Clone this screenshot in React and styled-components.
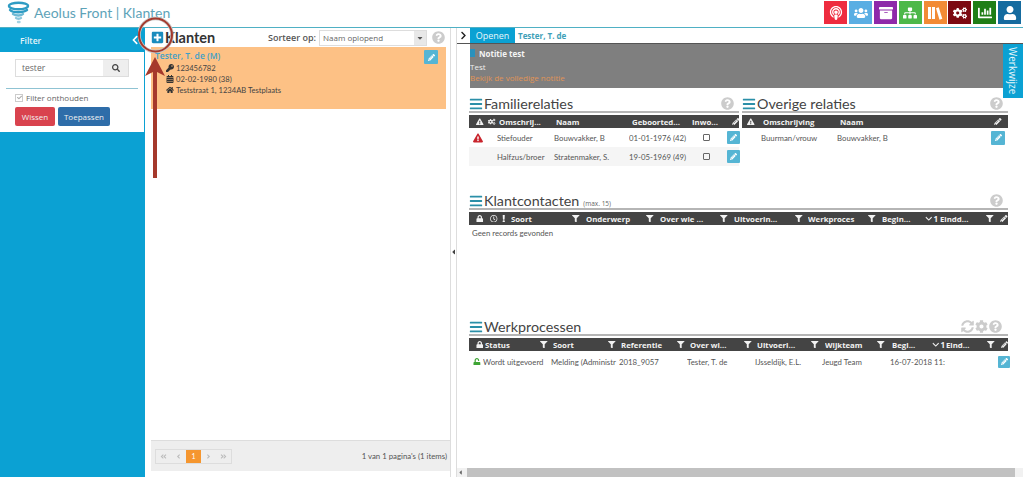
import React from 'react';
import styled, {createGlobalStyle} from 'styled-components';
import {
    FaPlusSquare, FaSearch, FaChevronLeft, FaChevronRight, FaKey, FaHome, FaCalendarAlt,
    FaExclamationTriangle, FaCogs, FaPencilAlt, FaFilter, FaLock, FaUnlock, FaRegClock, FaExclamation,
    FaBars, FaQuestionCircle, FaSyncAlt, FaCog, FaPodcast, FaUsers, FaArchive, FaSitemap,
    FaChartBar, FaUser, FaCheck, FaCaretDown, FaAngleDoubleLeft, FaAngleDoubleRight, FaAngleLeft,
    FaAngleRight, FaCaretLeft, FaChevronDown,
} from 'react-icons/fa';

const Global = createGlobalStyle`
  html, body { margin: 0; padding: 0; height: 100%; overflow: hidden; background: #fff; }
  body { font-family: "Open Sans", "Liberation Sans", sans-serif; color: #555; }
  * { box-sizing: border-box; }
`
const Page = styled.div`
  position: relative;
  width: 1023px;
  height: 477px;
  display: flex;
  flex-direction: column;
  overflow: hidden;
`
const TopBar = styled.header`
  height: 28px;
  flex: none;
  display: flex;
  align-items: center;
  justify-content: space-between;
  padding: 0 2px 2px 7px;
  border-bottom: 1px solid #4fb0c4;
`
const Brand = styled.div`
  display: flex;
  align-items: center;
  gap: 4px;
  font-family: Lato, sans-serif;
  font-size: 14px;
  color: #5ea3b8;
`
const Tiles = styled.nav`
  display: flex;
  gap: 1.8px;
`
const Tile = styled.div`
  width: 23px;
  height: 23px;
  display: flex;
  align-items: center;
  justify-content: center;
  color: #fff;
  font-size: 14px;
  background: ${p => p.$color};
`
const Body = styled.div`
  flex: 1;
  display: flex;
  min-height: 0;
`
const Sidebar = styled.aside`
  width: 145px;
  flex: none;
  background: #0ba1d3;
`
const FilterHead = styled.div`
  height: 24px;
  display: flex;
  align-items: center;
  justify-content: space-between;
  padding: 0 5px 0 20px;
  color: #e4f3f8;
  font-size: 8.5px;
  font-weight: 600;
  svg { color: #fff; font-size: 10px; }
`
const FilterBody = styled.div`
  height: 80px;
  background: #fff;
  margin-right: 1px;
  padding-top: 7px;
`
const SearchBox = styled.div`
  display: flex;
  width: 114px;
  height: 18px;
  margin-left: 15px;
  border: 1px solid #ddd;
  font-size: 8.5px;
  color: #666;
`
const SearchText = styled.div`
  flex: 1;
  padding: 2px 6px;
`
const SearchBtn = styled.div`
  width: 25px;
  background: #eee;
  display: flex;
  align-items: center;
  justify-content: center;
  font-size: 8px;
  color: #444;
`
const Rule = styled.div`
  height: 1px;
  background: #8fc3d3;
  margin: 11px 6px 3px;
`
const Remember = styled.label`
  display: flex;
  align-items: center;
  gap: 3px;
  margin-left: 15px;
  font-size: 8px;
  color: #666;
`
const Check = styled.span`
  width: 8px;
  height: 8px;
  border: 1px solid #ccc;
  display: inline-flex;
  align-items: center;
  justify-content: center;
  font-size: 5px;
  color: #aaa;
`
const Buttons = styled.div`
  display: flex;
  gap: 3px;
  margin: 4px 0 0 15px;
`
const Btn = styled.div`
  height: 19px;
  width: ${p => p.$w}px;
  display: flex;
  align-items: center;
  justify-content: center;
  border-radius: 2px;
  font-size: 8px;
  color: #f1f1f1;
  background: ${p => p.$color};
`
const ListPane = styled.section`
  width: 306px;
  flex: none;
  display: flex;
  flex-direction: column;
  padding-left: 6px;
  border-right: 1px solid #ddd;
`
const ListHead = styled.div`
  height: 19px;
  flex: none;
  display: flex;
  align-items: center;
  padding-right: 5px;
`
const PlusIcon = styled.span`
  display: flex;
  font-size: 13px;
  color: #1a8cbd;
  margin-right: 1px;
`
const Title = styled.h2`
  margin: 0;
  font-family: Lato, sans-serif;
  font-size: 14.5px;
  font-weight: 700;
  color: #333;
  flex: 1;
`
const SortLabel = styled.span`
  font-size: 9px;
  font-weight: 600;
  color: #555;
  margin-right: 3px;
`
const Select = styled.div`
  width: 108px;
  height: 16px;
  display: flex;
  justify-content: space-between;
  align-items: center;
  border: 1px solid #ddd;
  padding-left: 3px;
  font-size: 8px;
  color: #666;
`
const SelectArrow = styled.span`
  width: 12px;
  height: 14px;
  background: #e8e8e8;
  display: flex;
  align-items: center;
  justify-content: center;
  font-size: 8px;
  color: #555;
`
const Help = styled.span`
  display: inline-flex;
  color: #ccc;
  font-size: 13px;
  margin-left: 5px;
`
const Card = styled.article`
  position: relative;
  height: 62px;
  margin-right: 4px;
  background: #fdc185;
  padding: 3px 0 0 4px;
`
const CardName = styled.div`
  font-size: 8.5px;
  font-weight: 600;
  color: #3d9fc8;
  margin-bottom: 1px;
`
const CardLine = styled.div`
  display: flex;
  align-items: center;
  gap: 2px;
  height: 11px;
  margin-left: 11px;
  font-family: Lato, sans-serif;
  font-size: 7.6px;
  color: #444;
  svg { width: 8px; font-size: 8px; color: #333; }
`
const EditBtn = styled.span`
  width: ${p => p.$size || 13}px;
  height: ${p => p.$size || 13}px;
  display: inline-flex;
  align-items: center;
  justify-content: center;
  border-radius: 1px;
  background: #55b5d4;
  color: #fff;
  font-size: 7px;
`
const CardEdit = styled.div`
  position: absolute;
  top: 3px;
  right: 8px;
  display: flex;
`
const Spacer = styled.div`
  flex: 1;
`
const ListFoot = styled.div`
  height: 31px;
  flex: none;
  margin-bottom: 6px;
  border-top: 1px solid #ddd;
  background: #eee;
  display: flex;
  align-items: center;
  justify-content: space-between;
  padding: 0 3px 0 4px;
  font-family: Lato, sans-serif;
  font-size: 7.8px;
  color: #555;
`
const Pager = styled.div`
  display: flex;
  height: 15px;
  border: 1px solid #ddd;
`
const PageCell = styled.span`
  width: 15px;
  display: flex;
  align-items: center;
  justify-content: center;
  font-size: 7px;
  color: ${p => p.$on ? '#fff' : '#bbb'};
  background: ${p => p.$on ? '#f5962f' : 'transparent'};
`
const Splitter = styled.div`
  width: 5px;
  flex: none;
  display: flex;
  align-items: center;
  justify-content: center;
  padding-bottom: 2px;
  font-size: 8px;
  color: #444;
`
const DetailPane = styled.section`
  position: relative;
  flex: 1;
  min-width: 0;
  display: flex;
  flex-direction: column;
  border-left: 1px solid #ddd;
`
const TabBar = styled.div`
  height: 16px;
  flex: none;
  display: flex;
  align-items: stretch;
  border-bottom: 1px solid #555;
`
const Toggle = styled.span`
  width: 13px;
  display: flex;
  align-items: center;
  justify-content: center;
  font-size: 9px;
  color: #222;
`
const Tab = styled.span`
  width: 45px;
  display: flex;
  align-items: center;
  justify-content: center;
  background: #0ba1d3;
  color: #e8f6fa;
  font-size: 9px;
`
const TabName = styled.span`
  display: flex;
  align-items: center;
  margin-left: 3px;
  font-size: 8px;
  font-weight: 700;
  color: #3f9fb8;
`
const Content = styled.div`
  flex: 1;
  min-height: 0;
  padding-left: 12px;
`
const Note = styled.div`
  width: 533px;
  height: 44px;
  margin-left: 1px;
  background: #7f7f7f;
  padding-top: 3px;
  font-size: 8px;
  color: #eee;
`
const NoteTitle = styled.div`
  font-weight: 700;
  color: #f4f4f4;
  display: flex;
  align-items: center;
  gap: 4px;
  height: 12px;
  &::before { content: ""; width: 5px; height: 8px; background: #2a91bd; }
`
const NoteText = styled.div`
  height: 11px;
  margin-top: 2px;
`
const NoteLink = styled.div`
  height: 11px;
  color: #e09456;
`
const WerkTab = styled.div`
  position: absolute;
  top: 16px;
  right: 0;
  width: 20px;
  height: 54px;
  display: flex;
  align-items: center;
  justify-content: center;
  background: #0ba1d3;
  color: #e8f6fa;
  font-size: 10px;
  writing-mode: vertical-rl;
`
const TwoCol = styled.div`
  display: flex;
  gap: 3px;
  height: 97px;
  margin-top: 8px;
`
const Block = styled.div`
  width: ${p => p.$w}px;
`
const BlockHead = styled.div`
  height: 17px;
  display: flex;
  align-items: center;
  gap: 1px;
  padding-right: ${p => p.$pad || 5}px;
  border-bottom: 2px solid #b5b5b5;
`
const Burger = styled.span`
  display: flex;
  font-size: 14px;
  color: #2b8fa8;
`
const BlockTitle = styled.h3`
  margin: 0;
  font-family: Lato, sans-serif;
  font-size: 14.3px;
  line-height: 17px;
  font-weight: 400;
  color: #444;
`
const Small = styled.small`
  font-size: 6.5px;
  color: #666;
  margin: 5px 0 0 3px;
`
const Tools = styled.span`
  margin-left: auto;
  display: flex;
  gap: 1px;
  color: #ccc;
`
const HeadRow = styled.div`
  display: grid;
  grid-template-columns: ${p => p.$cols};
  height: 13px;
  margin-top: 2px;
  background: #444;
  color: #f2f2f2;
  font-size: 7.8px;
  font-weight: 700;
  align-items: center;
  white-space: nowrap;
  svg { font-size: 7.5px; display: block; }
`
const Row = styled.div`
  display: grid;
  grid-template-columns: ${p => p.$cols};
  height: ${p => p.$h || 19}px;
  align-items: center;
  font-family: Lato, sans-serif;
  font-size: 7.8px;
  color: #555;
  white-space: nowrap;
  background: ${p => p.$alt ? '#f5f5f5' : 'transparent'};
`
const Cell = styled.span`
  display: flex;
  align-items: center;
  overflow: hidden;
  padding-left: ${p => p.$pad || 0}px;
  color: ${p => p.$color || 'inherit'};
  font-size: ${p => p.$size ? p.$size + 'px' : 'inherit'};
`
const SortCell = styled(Cell)`
  gap: 1px;
  font-size: 8px;
`
const Box = styled.span`
  width: 7px;
  height: 7px;
  border: 1px solid #666;
  border-radius: 1px;
`
const Empty = styled.div`
  font-family: Lato, sans-serif;
  font-size: 7.8px;
  color: #555;
  padding: 3px;
`
const Third = styled.div`
  margin-top: ${p => p.$top}px;
  width: 539px;
`
const ScrollBar = styled.div`
  height: 9px;
  flex: none;
  background: #f1f1f1;
  display: flex;
  align-items: center;
  padding-right: 8px;
  font-size: 7px;
  color: #666;
`
const Thumb = styled.div`
  flex: 1;
  height: 9px;
  margin-left: 3px;
  background: #c1c1c1;
`
const ArrowMark = styled.svg`
  position: absolute;
  left: 138px;
  top: 14px;
`

const famCols = '19px 11px 57px 76px 60px 40px 10px'
const famRowCols = '28px 57px 75px 74px 24px 12px'
const otherCols = '21px 77px 1fr 14px'
const otherRowCols = '19px 76px 1fr 17px'
const contactCols = '7px 14px 10px 11px 61px 14px 60px 14px 60px 14px 61px 13px 60px 14px 43px 15px 46px 14px 1fr'
const procCols = '7px 9px 55px 13px 55px 13px 56px 13px 54px 13px 54px 14px 52px 15px 40px 14px 41px 14px 1fr'
const procRowCols = '14px 68px 68px 68px 68px 67px 68px 108px 14px'

const BooksIcon = () => (
    <svg width="16" height="14" viewBox="0 0 16 14" fill="#fff">
        <rect x="1" y="1" width="3" height="12"/>
        <rect x="5" y="1" width="3" height="12"/>
        <path d="M9 2.2l2.7-1 3.6 11.6-2.8.9z"/>
    </svg>
)

const tiles = [
    ['#ee2c3f', <FaPodcast/>], ['#59aee3', <FaUsers/>], ['#8e2aaa', <FaArchive/>], ['#4db849', <FaSitemap/>],
    ['#f28b35', <BooksIcon/>], ['#7c0a12', <FaCogs/>], ['#1f7e17', <FaChartBar/>], ['#156b9f', <FaUser/>],
]

const Logo = () => (
    <svg width="23" height="24" viewBox="0 0 23 24">
        <g fill="none" stroke="#2f9cc4" strokeWidth="2.4" strokeLinecap="round">
            <ellipse cx="11.5" cy="5" rx="9.5" ry="3.2"/>
            <path d="M3 9c3 3 13 3 17 0"/>
            <path d="M6 13c3 2 8 2 10 0" stroke="#6db9d4"/>
            <path d="M9 17c1 1 4 1 5 0" stroke="#8ac6dc"/>
            <path d="M11 21h1.5" stroke="#a5d2e2"/>
        </g>
    </svg>
)

const App = () => {
    return (
        <Page>
            <Global/>
            <TopBar>
                <Brand><Logo/>Aeolus Front | Klanten</Brand>
                <Tiles>{tiles.map(([c, icon]) => <Tile key={c} $color={c}>{icon}</Tile>)}</Tiles>
            </TopBar>
            <Body>
                <Sidebar>
                    <FilterHead>Filter<FaChevronLeft/></FilterHead>
                    <FilterBody>
                        <SearchBox><SearchText>tester</SearchText><SearchBtn><FaSearch/></SearchBtn></SearchBox>
                        <Rule/>
                        <Remember><Check><FaCheck/></Check>Filter onthouden</Remember>
                        <Buttons>
                            <Btn $color="#d9434e" $w={40}>Wissen</Btn>
                            <Btn $color="#2e6da9" $w={52}>Toepassen</Btn>
                        </Buttons>
                    </FilterBody>
                </Sidebar>
                <ListPane>
                    <ListHead>
                        <PlusIcon><FaPlusSquare/></PlusIcon>
                        <Title>Klanten</Title>
                        <SortLabel>Sorteer op:</SortLabel>
                        <Select>Naam oplopend<SelectArrow><FaCaretDown/></SelectArrow></Select>
                        <Help><FaQuestionCircle/></Help>
                    </ListHead>
                    <Card>
                        <CardName>Tester, T. de (M)</CardName>
                        <CardLine><FaKey/>123456782</CardLine>
                        <CardLine><FaCalendarAlt/>02-02-1980 (38)</CardLine>
                        <CardLine><FaHome/>Teststraat 1, 1234AB Testplaats</CardLine>
                        <CardEdit><EditBtn $size={14}><FaPencilAlt/></EditBtn></CardEdit>
                    </Card>
                    <Spacer/>
                    <ListFoot>
                        <Pager>
                            <PageCell><FaAngleDoubleLeft/></PageCell>
                            <PageCell><FaAngleLeft/></PageCell>
                            <PageCell $on>1</PageCell>
                            <PageCell><FaAngleRight/></PageCell>
                            <PageCell><FaAngleDoubleRight/></PageCell>
                        </Pager>
                        1 van 1 pagina's (1 items)
                    </ListFoot>
                </ListPane>
                <Splitter><FaCaretLeft/></Splitter>
                <DetailPane>
                    <TabBar>
                        <Toggle><FaChevronRight/></Toggle>
                        <Tab>Openen</Tab>
                        <TabName>Tester, T. de</TabName>
                    </TabBar>
                    <Content>
                        <Note>
                            <NoteTitle>Notitie test</NoteTitle>
                            <NoteText>Test</NoteText>
                            <NoteLink>Bekijk de volledige notitie</NoteLink>
                        </Note>
                        <TwoCol>
                            <Block $w={270}>
                                <BlockHead>
                                    <Burger><FaBars/></Burger><BlockTitle>Familierelaties</BlockTitle>
                                    <Tools><FaQuestionCircle size={13}/></Tools>
                                </BlockHead>
                                <HeadRow $cols={famCols}>
                                    <Cell $pad={7}><FaExclamationTriangle/></Cell>
                                    <Cell><FaCogs/></Cell>
                                    <Cell>Omschrij...</Cell>
                                    <Cell>Naam</Cell>
                                    <Cell>Geboorted...</Cell>
                                    <Cell>Inwo...</Cell>
                                    <Cell><FaPencilAlt/></Cell>
                                </HeadRow>
                                <Row $cols={famRowCols} $h={19}>
                                    <Cell $pad={4} $color="#c9252d" $size={10}><FaExclamationTriangle/></Cell>
                                    <Cell>Stiefouder</Cell>
                                    <Cell>Bouwvakker, B</Cell>
                                    <Cell>01-01-1976 (42)</Cell>
                                    <Cell><Box/></Cell>
                                    <EditBtn><FaPencilAlt/></EditBtn>
                                </Row>
                                <Row $cols={famRowCols} $alt $h={19}>
                                    <Cell/>
                                    <Cell>Halfzus/broer</Cell>
                                    <Cell>Stratenmaker, S.</Cell>
                                    <Cell>19-05-1969 (49)</Cell>
                                    <Cell><Box/></Cell>
                                    <EditBtn><FaPencilAlt/></EditBtn>
                                </Row>
                            </Block>
                            <Block $w={266}>
                                <BlockHead>
                                    <Burger><FaBars/></Burger><BlockTitle>Overige relaties</BlockTitle>
                                    <Tools><FaQuestionCircle size={13}/></Tools>
                                </BlockHead>
                                <HeadRow $cols={otherCols}>
                                    <Cell $pad={5}><FaExclamationTriangle/></Cell>
                                    <Cell>Omschrijving</Cell>
                                    <Cell>Naam</Cell>
                                    <Cell><FaPencilAlt/></Cell>
                                </HeadRow>
                                <Row $cols={otherRowCols}>
                                    <Cell/>
                                    <Cell>Buurman/vrouw</Cell>
                                    <Cell>Bouwvakker, B</Cell>
                                    <EditBtn $size={14}><FaPencilAlt/></EditBtn>
                                </Row>
                            </Block>
                        </TwoCol>
                        <Third $top={0}>
                            <BlockHead>
                                <Burger><FaBars/></Burger><BlockTitle>Klantcontacten</BlockTitle><Small>(max. 15)</Small>
                                <Tools><FaQuestionCircle size={13}/></Tools>
                            </BlockHead>
                            <HeadRow $cols={contactCols}>
                                <Cell/>
                                <Cell><FaLock/></Cell>
                                <Cell><FaRegClock/></Cell>
                                <Cell><FaExclamation/></Cell>
                                <Cell>Soort</Cell><Cell><FaFilter/></Cell>
                                <Cell>Onderwerp</Cell><Cell><FaFilter/></Cell>
                                <Cell>Over wie ...</Cell><Cell><FaFilter/></Cell>
                                <Cell>Uitvoerin...</Cell><Cell><FaFilter/></Cell>
                                <Cell>Werkproces</Cell><Cell><FaFilter/></Cell>
                                <Cell>Begin...</Cell><SortCell><FaChevronDown/>1</SortCell>
                                <Cell>Eindd...</Cell><Cell><FaFilter/></Cell>
                                <Cell><FaPencilAlt/></Cell>
                            </HeadRow>
                            <Empty>Geen records gevonden</Empty>
                        </Third>
                        <Third $top={78}>
                            <BlockHead $pad={6}>
                                <Burger><FaBars/></Burger><BlockTitle>Werkprocessen</BlockTitle>
                                <Tools><FaSyncAlt size={13}/><FaCog size={13}/><FaQuestionCircle size={13}/></Tools>
                            </BlockHead>
                            <HeadRow $cols={procCols}>
                                <Cell/>
                                <Cell><FaLock/></Cell>
                                <Cell>Status</Cell><Cell><FaFilter/></Cell>
                                <Cell>Soort</Cell><Cell><FaFilter/></Cell>
                                <Cell>Referentie</Cell><Cell><FaFilter/></Cell>
                                <Cell>Over wi...</Cell><Cell><FaFilter/></Cell>
                                <Cell>Uitvoeri...</Cell><Cell><FaFilter/></Cell>
                                <Cell>Wijkteam</Cell><Cell><FaFilter/></Cell>
                                <Cell>Begi...</Cell><SortCell><FaChevronDown/>1</SortCell>
                                <Cell>Eind...</Cell><Cell><FaFilter/></Cell>
                                <Cell><FaPencilAlt/></Cell>
                            </HeadRow>
                            <Row $cols={procRowCols} $h={21}>
                                <Cell $color="#3fa535" $pad={4}><FaUnlock/></Cell>
                                <Cell>Wordt uitgevoerd</Cell>
                                <Cell>Melding (Administr</Cell>
                                <Cell>2018_9057</Cell>
                                <Cell>Tester, T. de</Cell>
                                <Cell>IJsseldijk, E.L.</Cell>
                                <Cell>Jeugd Team</Cell>
                                <Cell>16-07-2018 11:</Cell>
                                <EditBtn $size={12}><FaPencilAlt/></EditBtn>
                            </Row>
                        </Third>
                    </Content>
                    <WerkTab>Werkwijze</WerkTab>
                    <ScrollBar><FaCaretLeft/><Thumb/></ScrollBar>
                </DetailPane>
            </Body>
            <ArrowMark width="40" height="170" viewBox="0 0 40 170">
                <circle cx="17.5" cy="21" r="16.5" fill="none" stroke="#c9c5c3" strokeWidth="3.5"/>
                <circle cx="17.5" cy="21" r="16.5" fill="none" stroke="#a53a2e" strokeWidth="2"/>
                <path d="M17 164V55" stroke="#a5392c" strokeWidth="4"/>
                <path d="M17 43 L27 62 L17 57 L7 62 Z" fill="#a5392c"/>
            </ArrowMark>
        </Page>
    )
}

export default App;
